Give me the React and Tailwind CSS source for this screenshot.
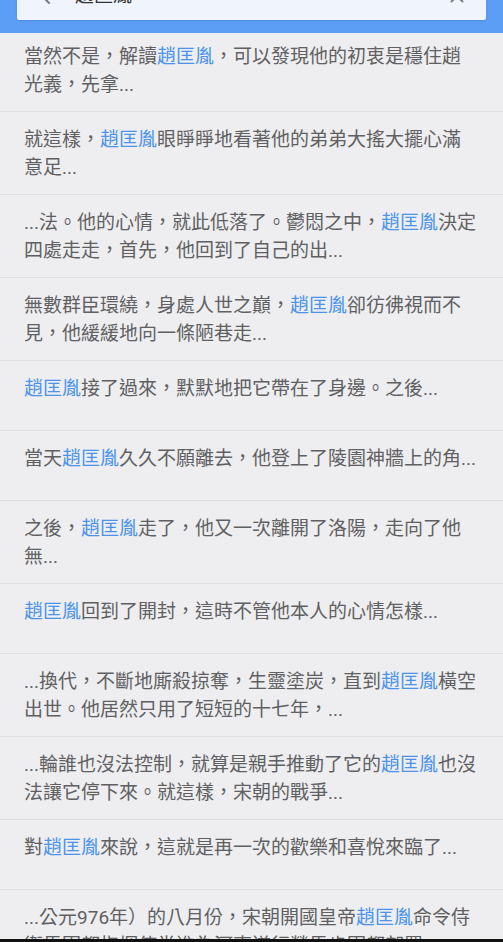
import { ArrowLeft, X } from 'lucide-react';

const KEYWORD = '趙匡胤';

const results = [
    '當然不是，解讀{k}，可以發現他的初衷是穩住趙光義，先拿...',
    '就這樣，{k}眼睜睜地看著他的弟弟大搖大擺心滿意足...',
    '...法。他的心情，就此低落了。鬱悶之中，{k}決定四處走走，首先，他回到了自己的出...',
    '無數群臣環繞，身處人世之巔，{k}卻彷彿視而不見，他緩緩地向一條陋巷走...',
    '{k}接了過來，默默地把它帶在了身邊。之後...',
    '當天{k}久久不願離去，他登上了陵園神牆上的角...',
    '之後，{k}走了，他又一次離開了洛陽，走向了他無...',
    '{k}回到了開封，這時不管他本人的心情怎樣...',
    '...換代，不斷地廝殺掠奪，生靈塗炭，直到{k}橫空出世。他居然只用了短短的十七年，...',
    '...輪誰也沒法控制，就算是親手推動了它的{k}也沒法讓它停下來。就這樣，宋朝的戰爭...',
    '對{k}來說，這就是再一次的歡樂和喜悅來臨了...',
    '...公元976年）的八月份，宋朝開國皇帝{k}命令侍衛馬軍都指揮使党進為河東道行營馬步軍都部署...',
];

function Snippet({ text }) {
    const parts = text.split('{k}');
    return (
        <p className="text-[19px] leading-[28px] text-[#606062]">
            {parts.map((part, i) => (
                <span key={i}>
                    {part}
                    {i < parts.length - 1 && <span className="text-[#4b93ea]">{KEYWORD}</span>}
                </span>
            ))}
        </p>
    );
}

export default function App() {
    return (
        <div
            lang="zh-Hant"
            className="h-[942px] overflow-hidden flex flex-col bg-[#eeeef0] font-['Roboto','Noto_Sans_CJK_TC',sans-serif]"
        >
            {/* Search header (scrolled partly out of view) */}
            <div className="shrink-0 bg-[#5c9ef5] px-[17px] pb-[13px]">
                <div className="-mt-[28px] h-[48px] flex items-center bg-[#f0f4fd] rounded-[2px] pl-[20px] pr-[18px] shadow-sm">
                    <ArrowLeft className="h-[24px] w-[24px] text-[#7a7a7c]" strokeWidth={2} />
                    <span className="ml-[14px] flex-1 text-[19px] text-[#333]">{KEYWORD}</span>
                    <X className="h-[22px] w-[22px] text-[#7a7a7c]" strokeWidth={2} />
                </div>
            </div>

            {/* Result list */}
            <div className="flex-1 min-h-0 overflow-hidden">
                {results.map((r, i) => (
                    <div
                        key={i}
                        className={`px-6 pb-[12px] border-b border-[#dddde0] min-h-[70px] ${i === 0 ? 'pt-[10px]' : 'pt-[14px]'}`}
                    >
                        <Snippet text={r} />
                    </div>
                ))}
            </div>

            <div className="shrink-0 h-[3px] bg-[#111]" />
        </div>
    );
}
